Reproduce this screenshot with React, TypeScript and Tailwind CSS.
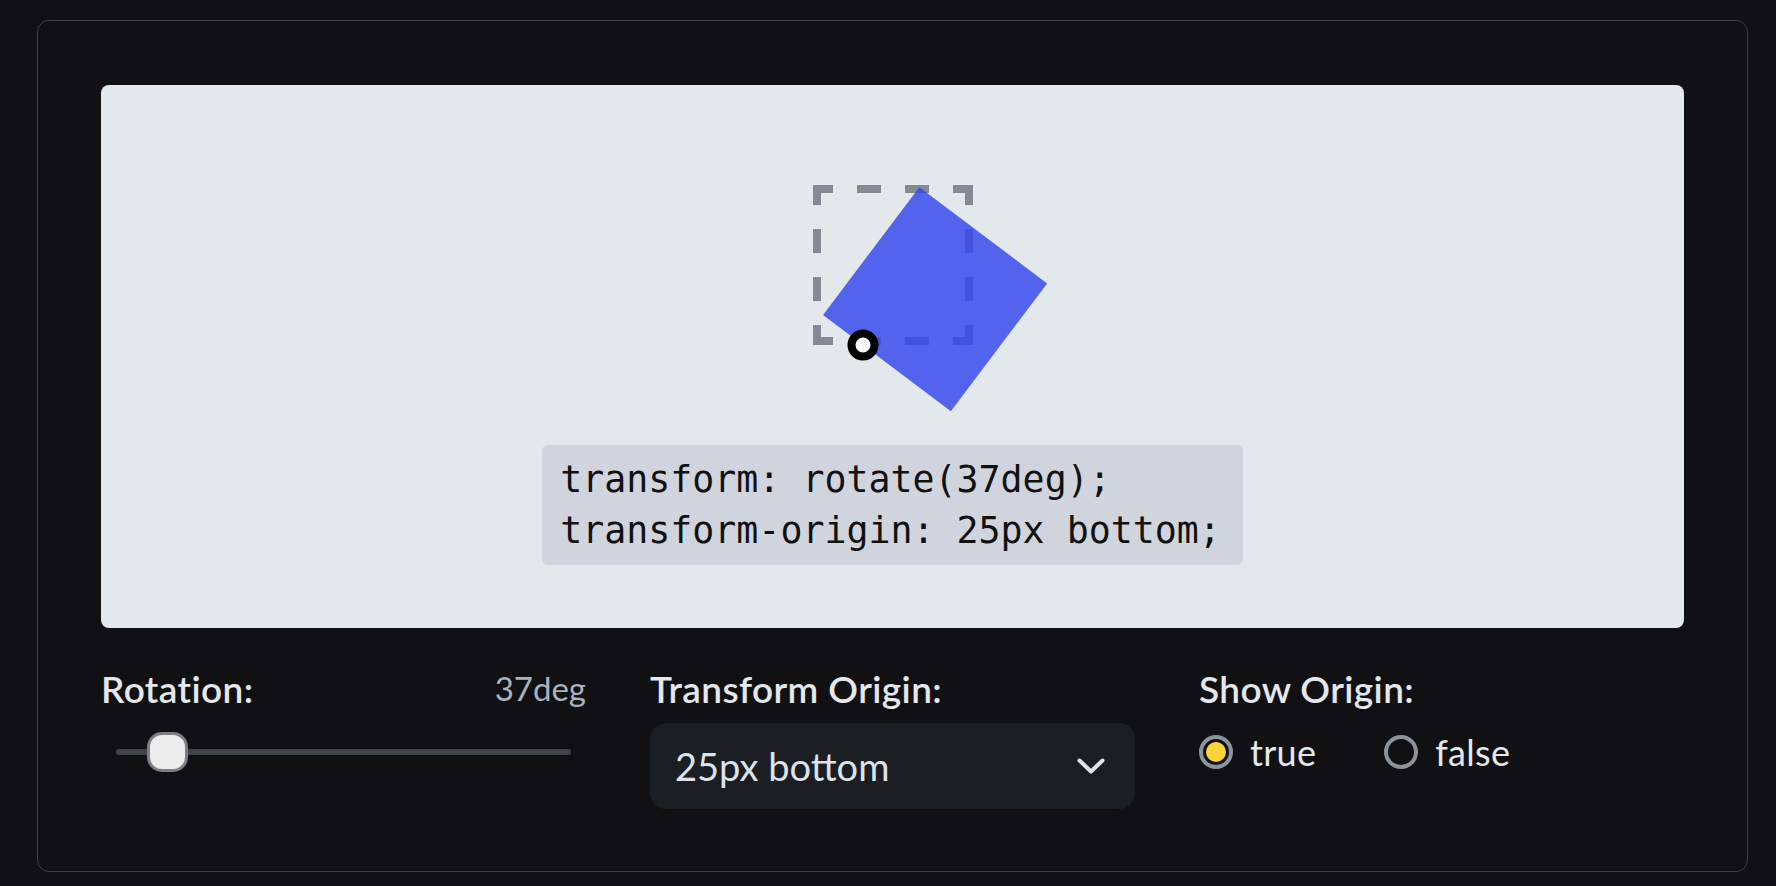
import React from 'react';

const DASHES: [number, number, number, number][] = [
  // top
  [0, 0, 20, 8], [44, 0, 24, 8], [92, 0, 24, 8], [140, 0, 20, 8],
  // bottom
  [0, 152, 20, 8], [44, 152, 24, 8], [92, 152, 24, 8], [140, 152, 20, 8],
  // left
  [0, 0, 8, 20], [0, 44, 8, 24], [0, 92, 8, 24], [0, 140, 8, 20],
  // right
  [152, 0, 8, 20], [152, 44, 8, 24], [152, 92, 8, 24], [152, 140, 8, 20],
];

function Preview() {
  return (
    <div className="h-[543px] bg-[#e2e8ec] rounded-lg flex flex-col items-center pt-[100px]">
      <div className="relative w-[160px] h-[160px]">
        <svg width="160" height="160" viewBox="0 0 160 160" className="absolute inset-0">
          {DASHES.map(([x, y, w, h], i) => (
            <rect key={i} x={x} y={y} width={w} height={h} fill="#878a94" />
          ))}
        </svg>
        <div className="absolute inset-0 bg-[rgba(50,70,238,0.82)] rotate-[37deg] origin-[50px_bottom]" />
        <div className="absolute left-[50px] top-[160px] -translate-x-1/2 -translate-y-1/2 w-[31px] h-[31px] rounded-full bg-white border-[8px] border-black" />
      </div>
      <div className="mt-[100px] bg-[#d0d4dd] rounded-md pl-[18px] pr-[22px] py-[9px] text-[36.6px] leading-[51px] text-[#111111] [font-family:'DejaVu_Sans_Mono',monospace] whitespace-pre">
        <div>transform: rotate(37deg);</div>
        <div>transform-origin: 25px bottom;</div>
      </div>
    </div>
  );
}

function Label({ children }: { children: React.ReactNode }) {
  return <span className="text-[37px] font-semibold tracking-[0.4px] text-[#e4e7eb]">{children}</span>;
}

function Radio({ checked, label }: { checked: boolean; label: string }) {
  return (
    <div className="flex items-center gap-[17px]">
      <div className="w-[34px] h-[34px] rounded-full border-[4px] border-[#8b939d] flex items-center justify-center">
        {checked && <div className="w-[20px] h-[20px] rounded-full bg-[#fdd435]" />}
      </div>
      <span className="text-[36px] tracking-[0.3px] text-[#e4e7eb]">{label}</span>
    </div>
  );
}

export default function App() {
  return (
    <div className="min-h-screen bg-[#111113] pt-[20px] pl-[37px] [font-family:Lato,'Open_Sans',sans-serif]">
      <div className="w-[1711px] border border-[#3e4147] rounded-xl px-[63px] pt-[64px] pb-[62px]">
        <Preview />

        {/* Controls */}
        <div className="grid grid-cols-3 gap-x-16 mt-[35px]">
          <div className="flex flex-col">
            <div className="h-[52px] flex items-center justify-between">
              <Label>Rotation:</Label>
              <span className="text-[33px] text-[#a8b3c0]">37deg</span>
            </div>
            <div className="mt-2 h-[58px] flex items-center px-[15px]">
              <div className="relative w-full h-[6px] rounded-full bg-[#3f434a]">
                <div className="absolute left-[31px] top-1/2 -translate-y-1/2 w-[41px] h-[40px] rounded-[15px] bg-[#ececec] border-[3px] border-[#7d7f85]" />
              </div>
            </div>
          </div>

          <div className="flex flex-col">
            <div className="h-[52px] flex items-center">
              <Label>Transform Origin:</Label>
            </div>
            <div className="mt-2 h-[86px] rounded-2xl bg-[#1b1e23] flex items-center justify-between pl-[25px] pr-[30px]">
              <span className="text-[38px] text-[#dde3ea]">25px bottom</span>
              <svg width="28" height="16" viewBox="0 0 28 16" fill="none">
                <polyline points="2.5,2.5 14,13.5 25.5,2.5" stroke="#dde3ea" strokeWidth="4" strokeLinecap="round" strokeLinejoin="round" />
              </svg>
            </div>
          </div>

          <div className="flex flex-col">
            <div className="h-[52px] flex items-center">
              <Label>Show Origin:</Label>
            </div>
            <div className="mt-2 h-[58px] flex items-center gap-[68px]">
              <Radio checked label="true" />
              <Radio checked={false} label="false" />
            </div>
          </div>
        </div>
      </div>
    </div>
  );
}
